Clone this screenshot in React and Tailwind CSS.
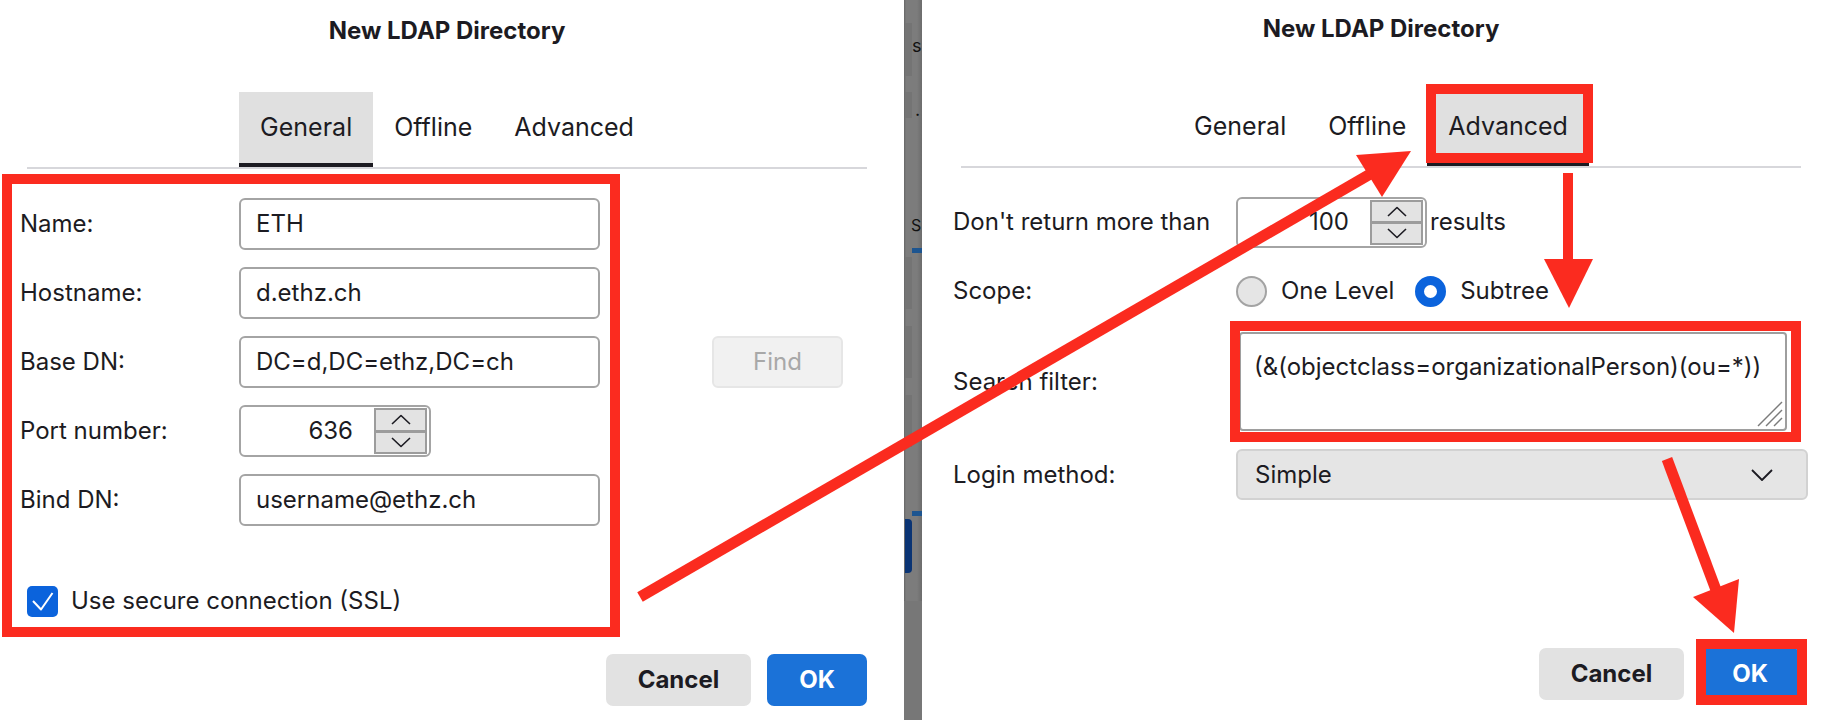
import React from 'react';

const RED = 'border-[#fb2b1f]';

const Chevron = ({ up }) => (
    <svg width="20" height="11" viewBox="0 0 20 11" fill="none">
        <polyline
            points={up ? '1,10 10,1.5 19,10' : '1,1 10,9.5 19,1'}
            stroke="#1c1b22"
            strokeWidth="1.6"
            strokeLinejoin="round"
        />
    </svg>
);

const Spinner = ({ value, className }) => (
    <div className={`flex items-stretch border-2 border-[#a4a4a4] rounded-[6px] bg-white ${className}`}>
        <div className="flex-1 flex items-center justify-end pr-[21px]">{value}</div>
        <div className="w-[53px] my-[1px] mr-[2px] flex flex-col border-2 border-[#9c9c9c] bg-[#e3e3e3]">
            <div className="flex-1 flex items-center justify-center"><Chevron up /></div>
            <div className="h-[3px] bg-[#9c9c9c]"></div>
            <div className="flex-1 flex items-center justify-center"><Chevron /></div>
        </div>
    </div>
);

const Field = ({ label, children }) => (
    <div className="flex items-center">
        <div className="w-[219px] shrink-0">{label}</div>
        {children}
    </div>
);

const TextBox = ({ value }) => (
    <div className="w-[361px] h-[52px] border-2 border-[#a4a4a4] rounded-[6px] pl-[15px] flex items-center">
        {value}
    </div>
);

const Tab = ({ label, active, marked }) => (
    <div
        className={`relative px-[21px] pt-[21px] pb-[22px] text-[25px] leading-[28px] border-b-4 ${
            active ? 'bg-[#e0e0e0] border-[#1c1b22]' : 'border-transparent'
        }`}
    >
        {label}
        {marked && (
            <div className={`absolute -top-[7px] -bottom-[1px] -left-[1px] -right-[4px] border-[10px] ${RED}`}></div>
        )}
    </div>
);

const Radio = ({ checked, label }) => (
    <div className="flex items-center gap-[14px]">
        {checked ? (
            <div className="w-[31px] h-[31px] rounded-full border-[9px] border-[#0b63dc] bg-white"></div>
        ) : (
            <div className="w-[31px] h-[31px] rounded-full border-2 border-[#a3a3a3] bg-[#e5e5e5]"></div>
        )}
        <span>{label}</span>
    </div>
);

const Buttons = ({ markOk }) => (
    <div className="flex justify-end gap-[16px]">
        <button className="h-[52px] px-8 rounded-[7px] bg-[#e2e2e2] font-bold">Cancel</button>
        <button className="relative h-[52px] px-8 rounded-[7px] bg-[#1b72d8] text-white font-bold">
            OK
            {markOk && (
                <div className={`absolute -top-[9px] -bottom-[5px] -left-[4px] -right-[7px] border-[10px] ${RED}`}></div>
            )}
        </button>
    </div>
);

// left dialog: General tab
const GeneralDialog = () => (
    <div className="w-[904px] shrink-0 flex flex-col bg-white">
        <div className="pl-[27px] pr-[37px]">
            <div className="pt-[17px] leading-[28px] font-bold text-center">New LDAP Directory</div>
            <div className="mt-[47px] flex justify-center">
                <Tab label="General" active />
                <Tab label="Offline" />
                <Tab label="Advanced" />
            </div>
            <div className="h-[2px] bg-[#d7d7db]"></div>
        </div>

        <div className="mt-[5px] flex items-start">
            <div className={`ml-[2px] w-[618px] border-[10px] ${RED} pl-[8px] pt-[14px] pb-[8px] flex flex-col`}>
                <div className="flex flex-col gap-[17px]">
                    <Field label="Name:"><TextBox value="ETH" /></Field>
                    <Field label="Hostname:"><TextBox value="d.ethz.ch" /></Field>
                    <Field label="Base DN:"><TextBox value="DC=d,DC=ethz,DC=ch" /></Field>
                    <Field label="Port number:">
                        <Spinner value="636" className="w-[192px] h-[52px]" />
                    </Field>
                    <Field label="Bind DN:"><TextBox value="username@ethz.ch" /></Field>
                </div>
                <div className="mt-[57px] ml-[7px] flex items-center gap-[13px]">
                    <div className="w-[31px] h-[31px] rounded-[5px] bg-[#0b63dc] flex items-center justify-center">
                        <svg width="31" height="31" viewBox="0 0 31 31" fill="none">
                            <polyline points="6,15 14,23.5 25.5,7" stroke="white" strokeWidth="2" strokeLinejoin="round" />
                        </svg>
                    </div>
                    <span>Use secure connection (SSL)</span>
                </div>
            </div>
            <button className="ml-[92px] mt-[162px] w-[131px] h-[52px] rounded-[6px] border-2 border-[#e6e6e6] bg-[#f1f1f1] text-[#a8a8a8]">
                Find
            </button>
        </div>

        <div className="mt-[17px] pr-[37px]">
            <Buttons />
        </div>
    </div>
);

// sliver of the window behind both dialogs
const BackWindow = () => (
    <div className="relative w-[18px] shrink-0 overflow-hidden bg-[linear-gradient(to_right,#666_0px,#7c7c7c_2px,#7c7c7c_13px,#6c6c6c_18px)]">
        <div className="absolute left-[1px] w-[7px] top-[23px] h-[53px] bg-[#747474]"></div>
        <div className="absolute left-[1px] w-[7px] top-[92px] h-[26px] bg-[#747474]"></div>
        <div className="absolute left-[1px] w-[7px] top-[257px] h-[52px] bg-[#747474]"></div>
        <div className="absolute left-[1px] w-[7px] top-[326px] h-[52px] bg-[#747474]"></div>
        <div className="absolute left-[1px] w-[7px] top-[395px] h-[52px] bg-[#747474]"></div>
        <div className="absolute left-[8px] top-[36px] text-[18px] leading-[20px] text-[#111]">s</div>
        <div className="absolute left-[11px] top-[100px] text-[18px] leading-[20px] text-[#111]">.</div>
        <div className="absolute left-[7px] top-[215px] text-[16px] leading-[20px] text-[#111]">S</div>
        <div className="absolute left-[8px] w-[12px] top-[248px] h-[5px] bg-[#1d5590]"></div>
        <div className="absolute left-[8px] w-[12px] top-[511px] h-[5px] bg-[#1d5590]"></div>
        <div className="absolute left-[1px] w-[7px] top-[519px] h-[54px] rounded-r-[4px] bg-[#0a3474]"></div>
        <div className="absolute left-0 right-0 top-[601px] bottom-0 bg-[#777]"></div>
    </div>
);

// right dialog: Advanced tab
const AdvancedDialog = () => (
    <div className="flex-1 flex flex-col bg-white">
        <div className="pl-[39px] pr-[27px]">
            <div className="pt-[15px] leading-[28px] font-bold text-center">New LDAP Directory</div>
            <div className="mt-[48px] flex justify-center">
                <Tab label="General" />
                <Tab label="Offline" />
                <Tab label="Advanced" active marked />
            </div>
            <div className="h-[2px] bg-[#d7d7db]"></div>
        </div>

        <div className="pl-[31px] mt-[28px] flex flex-col">
            <div className="flex items-center h-[52px]">
                <div className="w-[283px] shrink-0">Don't return more than</div>
                <Spinner value="100" className="w-[191px] h-[51px]" />
                <span className="ml-[3px]">results</span>
            </div>
            <div className="mt-[17px] flex items-center h-[52px]">
                <div className="w-[283px] shrink-0">Scope:</div>
                <div className="flex items-center gap-[21px]">
                    <Radio label="One Level" />
                    <Radio label="Subtree" checked />
                </div>
            </div>
            <div className="mt-[15px] flex items-center">
                <div className="w-[286px] shrink-0">Search filter:</div>
                <div className="relative w-[548px] h-[99px] border-2 border-[#9e9e9e] rounded-[4px] pl-[13px] pt-[19px] leading-[28px]">
                    (&amp;(objectclass=organizationalPerson)(ou=*))
                    <svg className="absolute right-[2px] bottom-[2px]" width="26" height="26" viewBox="0 0 26 26">
                        <g stroke="#7b7b7b" strokeWidth="1.5">
                            <line x1="25" y1="1" x2="1" y2="25" />
                            <line x1="25" y1="9" x2="9" y2="25" />
                            <line x1="25" y1="17" x2="17" y2="25" />
                        </g>
                    </svg>
                    <div className={`absolute -top-[13px] -bottom-[13px] -left-[11px] -right-[16px] border-[10px] ${RED}`}></div>
                </div>
            </div>
            <div className="mt-[18px] flex items-center">
                <div className="w-[283px] shrink-0">Login method:</div>
                <div className="w-[572px] h-[51px] rounded-[6px] border-2 border-[#d2d2d2] bg-[#e5e5e5] pl-[17px] pr-[33px] flex items-center justify-between">
                    <span>Simple</span>
                    <svg width="22" height="12" viewBox="0 0 22 12" fill="none">
                        <polyline points="1,1 11,11 21,1" stroke="#1c1b22" strokeWidth="1.8" strokeLinejoin="round" />
                    </svg>
                </div>
            </div>
        </div>

        <div className="mt-[148px] pr-[28px]">
            <Buttons markOk />
        </div>
    </div>
);

const App = () => {
    return (
        <div className="relative w-[1828px] h-[720px] overflow-hidden flex bg-white text-[24px] text-[#1c1b22] font-['Inter','Liberation_Sans',sans-serif]">
            <GeneralDialog />
            <BackWindow />
            <AdvancedDialog />

            {/* annotation arrows */}
            <svg className="absolute inset-0 pointer-events-none" width="1828" height="720">
                <g fill="#fb2b1f" stroke="#fb2b1f">
                    <line x1="640" y1="597" x2="1372" y2="173" strokeWidth="11" />
                    <polygon points="1411,151 1356,155 1382,197" stroke="none" />
                    <line x1="1568" y1="173" x2="1568" y2="262" strokeWidth="10" />
                    <polygon points="1544,259 1593,259 1569,308" stroke="none" />
                    <line x1="1667" y1="459" x2="1716" y2="590" strokeWidth="11" />
                    <polygon points="1734,633 1693,597 1739,579" stroke="none" />
                </g>
            </svg>
        </div>
    );
};

export default App;
